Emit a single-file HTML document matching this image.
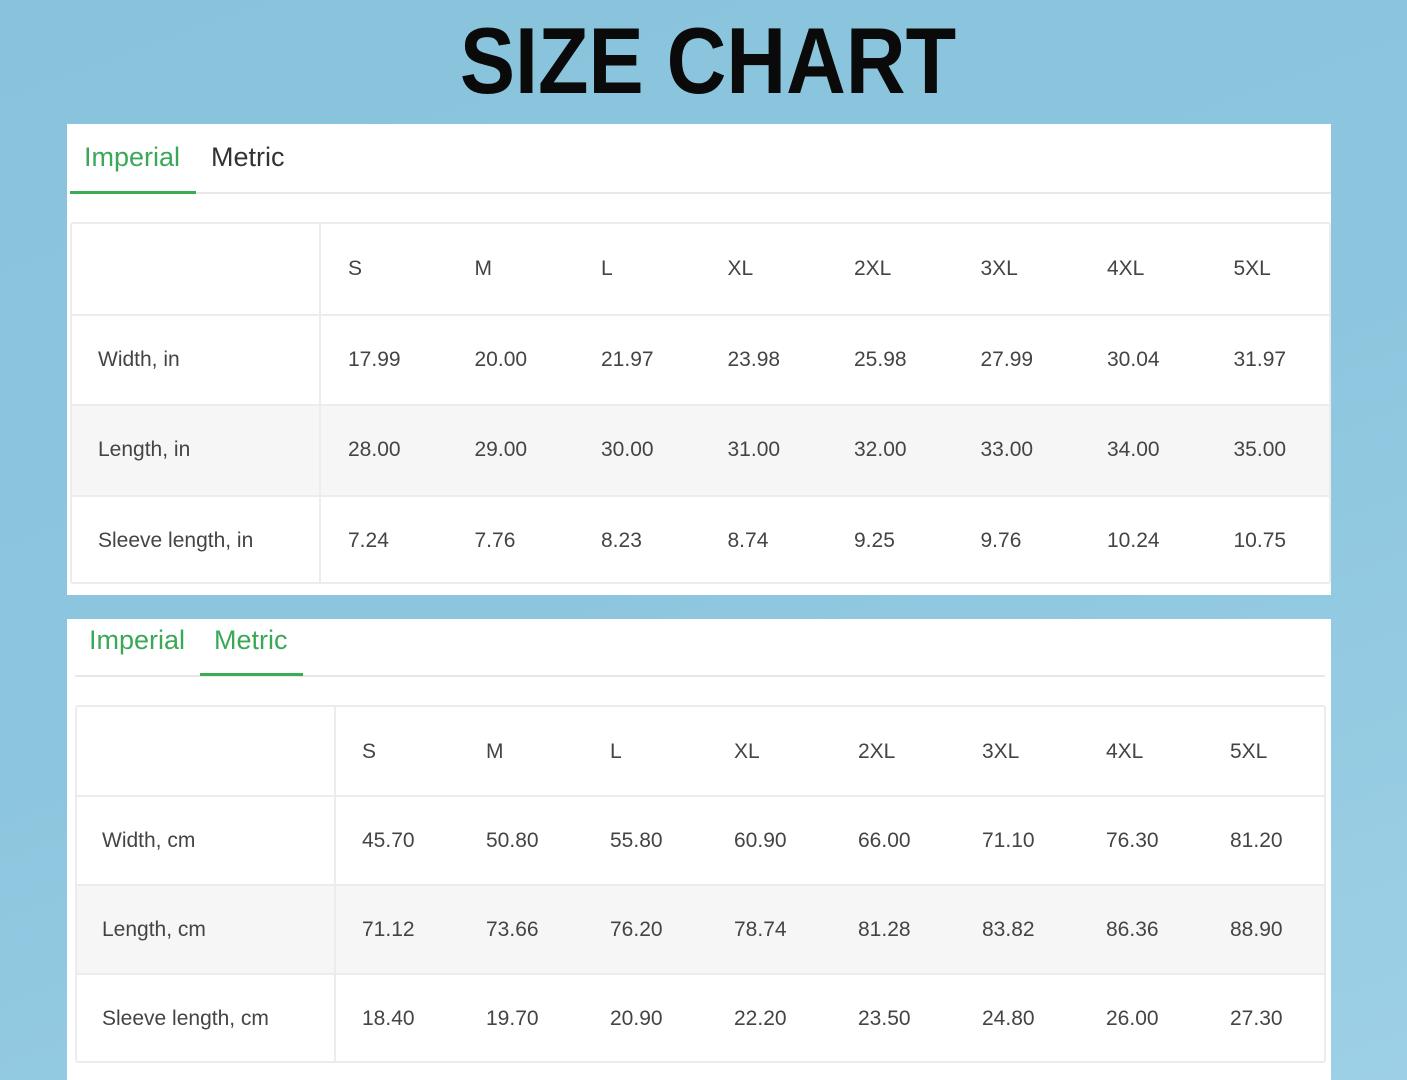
<!DOCTYPE html>
<html><head><meta charset="utf-8"><style>
*{margin:0;padding:0;box-sizing:border-box}
body{width:1407px;height:1080px;overflow:hidden;background:linear-gradient(160deg,#88c3dc 0%,#8cc6de 50%,#9dd0e6 100%);font-family:"Liberation Sans",sans-serif;position:relative}
.title{position:absolute;left:408px;top:16px;width:600px;height:90px;text-align:center;font-weight:bold;font-size:94px;line-height:90px;color:#0a0a0a;letter-spacing:0px;white-space:nowrap}
.title span{display:inline-block;transform:scaleX(0.88);transform-origin:center}
.panel{position:absolute;left:67px;width:1264px;background:#fff}
.tab{position:absolute;font-size:27px;color:#333}
.g{color:#3aa857}
.ul{position:absolute;height:3px;background:#3aad54}
.gl{position:absolute;height:2px;background:#e8e8e8}
.box{position:absolute;border:2px solid #ececec;border-radius:3px;overflow:hidden}
.row{position:absolute;left:0;right:0;border-top:2px solid #ececec}
.row.alt{background:#f6f6f6}
.c{position:absolute;font-size:21px;color:#444;transform:translateY(-50%)}
.vd{position:absolute;top:0;bottom:0;width:2px;background:#ececec}
</style></head><body>
<div class="title"><span>SIZE CHART</span></div>

<div class="panel" style="top:124px;height:471px">
 <div class="tab g" style="left:17px;top:18px">Imperial</div>
 <div class="tab" style="left:144px;top:18px">Metric</div>
 <div class="gl" style="left:3px;right:0;top:68px"></div>
 <div class="ul" style="left:3px;width:126px;top:67px"></div>
 <div class="box" style="left:3px;top:98px;width:1261px;height:362px" id="b1"></div>
</div>

<div class="panel" style="top:619px;height:461px">
 <div class="tab g" style="left:22px;top:6px">Imperial</div>
 <div class="tab g" style="left:147px;top:6px">Metric</div>
 <div class="gl" style="left:8px;width:1250px;top:56px"></div>
 <div class="ul" style="left:133px;width:103px;top:54px"></div>
 <div class="box" style="left:8px;top:86px;width:1251px;height:358px" id="b2"></div>
</div>

<script>
function build(id,rowH,labX,divX,c0,step,labels,data){
 var b=document.getElementById(id),h='';
 var sizes=['S','M','L','XL','2XL','3XL','4XL','5XL'];
 for(var r=1;r<4;r++){h+='<div class="row'+(r==2?' alt':'')+'" style="top:'+(rowH*r-1)+'px;height:'+(rowH+1)+'px"></div>';}
 h+='<div class="vd" style="left:'+divX+'px"></div>';
 for(var i=0;i<8;i++)h+='<div class="c" style="left:'+(c0+step*i)+'px;top:'+(rowH*0.5)+'px">'+sizes[i]+'</div>';
 for(var r=0;r<3;r++){
  var y=rowH*(r+1.5);
  h+='<div class="c" style="left:'+labX+'px;top:'+y+'px">'+labels[r]+'</div>';
  for(var i=0;i<8;i++)h+='<div class="c" style="left:'+(c0+step*i)+'px;top:'+y+'px">'+data[r][i]+'</div>';
 }
 b.innerHTML=h;
}
build('b1',90.5,26,247,276,126.5,['Width, in','Length, in','Sleeve length, in'],[
['17.99','20.00','21.97','23.98','25.98','27.99','30.04','31.97'],
['28.00','29.00','30.00','31.00','32.00','33.00','34.00','35.00'],
['7.24','7.76','8.23','8.74','9.25','9.76','10.24','10.75']]);
build('b2',89,25,257,285,124,['Width, cm','Length, cm','Sleeve length, cm'],[
['45.70','50.80','55.80','60.90','66.00','71.10','76.30','81.20'],
['71.12','73.66','76.20','78.74','81.28','83.82','86.36','88.90'],
['18.40','19.70','20.90','22.20','23.50','24.80','26.00','27.30']]);
</script>
</body></html>
